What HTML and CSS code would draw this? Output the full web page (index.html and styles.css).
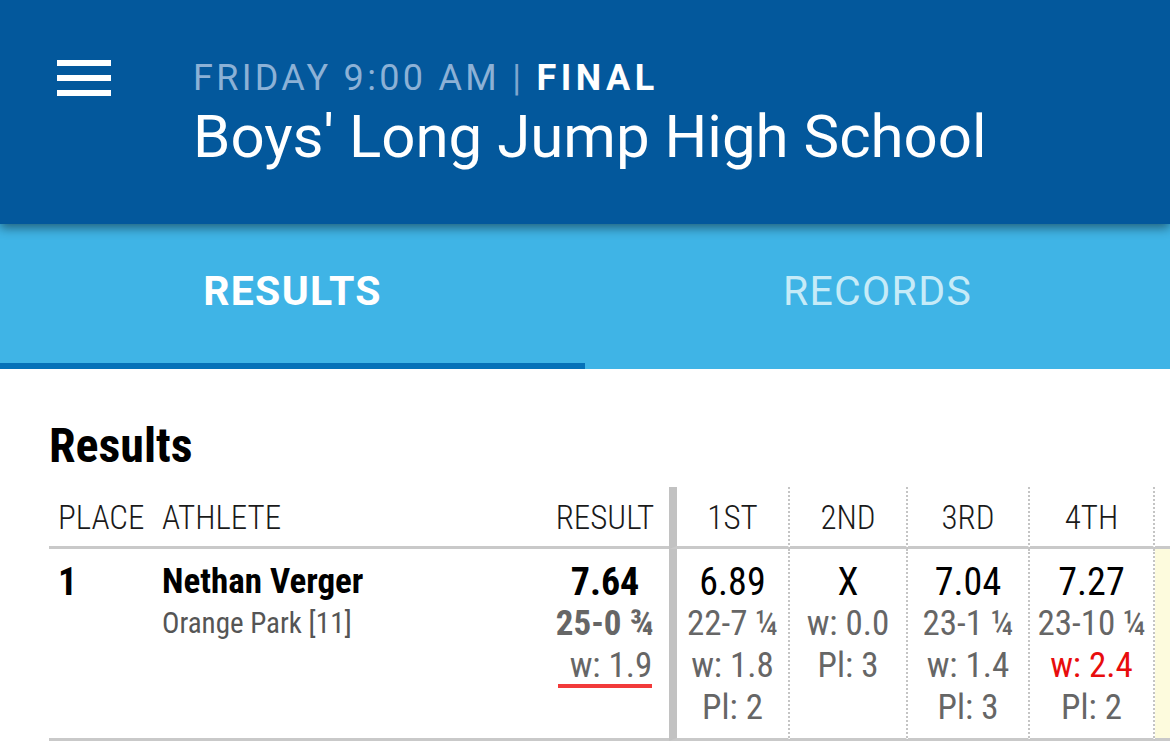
FILE: index.html
```html
<!DOCTYPE html>
<html>
<head>
<meta charset="utf-8">
<link rel="stylesheet" href="styles.css">
</head>
<body>
<header class="appbar">
  <div class="menu" aria-label="Menu">
    <span class="bar"></span><span class="bar"></span><span class="bar"></span>
  </div>
  <div class="titles">
    <div class="meta">FRIDAY 9:00 AM <span class="sep">|</span> <span class="final">FINAL</span></div>
    <h1 class="title">Boys' Long Jump High School</h1>
  </div>
</header>
<nav class="tabs">
  <div class="tab active">RESULTS</div>
  <div class="tab">RECORDS</div>
</nav>
<main class="content">
  <h2 class="heading">Results</h2>
  <div class="grid">
    <div class="th c-place">PLACE</div>
    <div class="th c-athlete">ATHLETE</div>
    <div class="th c-result">RESULT</div>
    <div class="th c-att first">1ST</div>
    <div class="th c-att">2ND</div>
    <div class="th c-att">3RD</div>
    <div class="th c-att">4TH</div>
    <div class="th c-att"></div>

    <div class="td c-place"><div class="strong">1</div></div>
    <div class="td c-athlete">
      <div class="name">Nethan Verger</div>
      <div class="team">Orange Park [11]</div>
    </div>
    <div class="td c-result">
      <div class="mark strong">7.64</div>
      <div class="sub bold">25-0 ¾</div>
      <div class="sub"><span class="wind-flag">w: 1.9</span></div>
    </div>
    <div class="td c-att first">
      <div class="mark">6.89</div>
      <div class="sub">22-7 ¼</div>
      <div class="sub">w: 1.8</div>
      <div class="sub">Pl: 2</div>
    </div>
    <div class="td c-att">
      <div class="mark">X</div>
      <div class="sub">w: 0.0</div>
      <div class="sub">Pl: 3</div>
    </div>
    <div class="td c-att">
      <div class="mark">7.04</div>
      <div class="sub">23-1 ¼</div>
      <div class="sub">w: 1.4</div>
      <div class="sub">Pl: 3</div>
    </div>
    <div class="td c-att">
      <div class="mark">7.27</div>
      <div class="sub">23-10 ¼</div>
      <div class="sub red">w: 2.4</div>
      <div class="sub">Pl: 2</div>
    </div>
    <div class="td c-att best"></div>
  </div>
</main>
</body>
</html>
```
FILE: styles.css
```css
html, body {
  margin: 0;
  padding: 0;
  background: #ffffff;
  overflow: hidden;
}
body {
  width: 1170px;
  height: 741px;
  font-family: "Roboto", "Noto Sans", sans-serif;
}

/* App bar */
.appbar {
  position: relative;
  z-index: 1;
  height: 224px;
  box-sizing: border-box;
  background: #03589c;
  display: flex;
  align-items: flex-start;
  padding: 54px 0 0 57px;
  box-shadow: 0 4px 10px rgba(0, 0, 0, 0.45);
}
.menu {
  margin-top: 6px;
  width: 54px;
  display: flex;
  flex-direction: column;
  gap: 9px;
}
.bar {
  display: block;
  height: 6px;
  background: #ffffff;
}
.titles {
  margin-left: 82px;
}
.meta {
  font-family: "Roboto", sans-serif;
  font-size: 36px;
  line-height: 48px;
  letter-spacing: 3.3px;
  color: #8cb1d6;
  white-space: nowrap;
}
.meta .sep {
  color: #7fa6cf;
}
.meta .final {
  color: #ffffff;
  font-weight: 700;
  letter-spacing: 4.5px;
}
.title {
  margin: 0;
  font-family: "Roboto", sans-serif;
  font-weight: 400;
  font-size: 60px;
  line-height: 70px;
  color: #ffffff;
  white-space: nowrap;
}

/* Tabs */
.tabs {
  height: 145px;
  background: #3fb4e6;
  display: flex;
}
.tab {
  flex: 1;
  display: flex;
  align-items: center;
  justify-content: center;
  padding-bottom: 5px;
  box-sizing: border-box;
  font-family: "Roboto", sans-serif;
  font-size: 41px;
  letter-spacing: 1.3px;
  color: #c6ebf8;
  border-bottom: 6px solid transparent;
}
.tab.active {
  color: #ffffff;
  font-weight: 700;
  border-bottom-color: #0571b8;
}

/* Content */
.content {
  padding: 49px 0 0 49px;
  font-family: "Roboto Condensed", "Roboto", sans-serif;
  font-stretch: condensed;
}
.heading {
  margin: 0;
  font-size: 48px;
  line-height: 56px;
  font-weight: 700;
  color: #000000;
}
.grid {
  margin-top: 13px;
  display: grid;
  grid-template-columns: 104px 352px 164px 121px 118px 122px 125px 125px;
  width: max-content;
}
.th {
  box-sizing: border-box;
  font-family: "Roboto Condensed Light", "Roboto Condensed", "Roboto", sans-serif;
  font-size: 33px;
  line-height: 42px;
  font-weight: 300;
  color: #1a1a1a;
  padding: 10px 0 7px;
  border-bottom: 3px solid #c9c9c9;
  white-space: nowrap;
}
.td {
  box-sizing: border-box;
  padding: 12px 0 9px;
  border-bottom: 3px solid #c9c9c9;
  font-size: 35px;
  line-height: 42px;
  color: #666666;
  white-space: nowrap;
}
.c-place {
  padding-left: 9px;
}
.c-athlete {
  padding-left: 9px;
}
.c-result {
  text-align: center;
  padding-left: 50px;
  padding-right: 14px;
}
.c-att {
  text-align: center;
  border-right: 2px dotted #c4c4c4;
}
.c-att.first {
  border-left: 8px solid #c2c2c2;
}
.best {
  background: #fdfbdd;
}
.strong {
  font-size: 38px;
  font-weight: 700;
  color: #000000;
}
.mark {
  font-size: 38px;
  color: #000000;
}
.bold {
  font-weight: 700;
}
.name {
  font-size: 35px;
  line-height: 42px;
  font-weight: 700;
  color: #000000;
}
.team {
  font-size: 29px;
  line-height: 40px;
  color: #555555;
}
.wind-flag {
  padding: 0 0 2px 12px;
  background: linear-gradient(#f23a3a, #f23a3a) no-repeat left bottom / 100% 4px;
}
.red {
  color: #e80d0d;
}
```
